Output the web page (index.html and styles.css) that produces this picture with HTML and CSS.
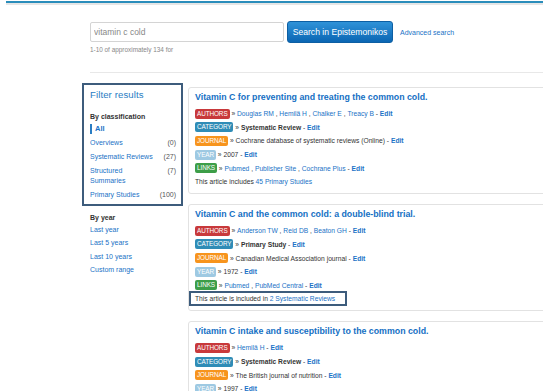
FILE: index.html
```html
<!DOCTYPE html>
<html lang="en">
<head>
    <meta charset="UTF-8">
    <meta name="viewport" content="width=device-width, initial-scale=1.0">
    <title>vitamin c cold - Epistemonikos</title>
    <link rel="stylesheet" href="styles.css">
</head>
<body>
    <div class="topbar"></div>

    <div class="search">
        <div class="search-row">
            <input type="text" class="search-input" value="vitamin c cold">
            <button class="search-btn" type="button">Search in Epistemonikos</button>
            <a href="#" class="advanced">Advanced search</a>
        </div>
        <p class="hits">1-10 of approximately 134 for</p>
    </div>

    <div class="main">
        <!-- Sidebar -->
        <div class="sidebar">
            <div class="filter-box">
                <h2>Filter results</h2>
                <h3>By classification</h3>
                <ul class="filters">
                    <li class="active"><a href="#">All</a></li>
                    <li><a href="#">Overviews</a><span>(0)</span></li>
                    <li><a href="#">Systematic Reviews</a><span>(27)</span></li>
                    <li><a href="#">Structured<br>Summaries</a><span>(7)</span></li>
                    <li><a href="#">Primary Studies</a><span>(100)</span></li>
                </ul>
            </div>
            <div class="year-filter">
                <h3>By year</h3>
                <ul class="years">
                    <li><a href="#">Last year</a></li>
                    <li><a href="#">Last 5 years</a></li>
                    <li><a href="#">Last 10 years</a></li>
                    <li><a href="#">Custom range</a></li>
                </ul>
            </div>
        </div>

        <!-- Results -->
        <div class="results">
            <div class="card">
                <h1><a href="#">Vitamin C for preventing and treating the common cold.</a></h1>
                <div class="row"><span class="label authors">AUTHORS</span> &raquo; <a href="#">Douglas RM</a> , <a href="#">Hemilä H</a> , <a href="#">Chalker E</a> , <a href="#">Treacy B</a> - <a href="#" class="edit">Edit</a></div>
                <div class="row"><span class="label category">CATEGORY</span> &raquo; <b>Systematic Review</b> - <a href="#" class="edit">Edit</a></div>
                <div class="row"><span class="label journal">JOURNAL</span> &raquo; Cochrane database of systematic reviews (Online) - <a href="#" class="edit">Edit</a></div>
                <div class="row"><span class="label year">YEAR</span> &raquo; 2007 - <a href="#" class="edit">Edit</a></div>
                <div class="row"><span class="label links">LINKS</span> &raquo; <a href="#">Pubmed</a> , <a href="#">Publisher Site</a> , <a href="#">Cochrane Plus</a> - <a href="#" class="edit">Edit</a></div>
                <div class="row">This article includes <a href="#">45 Primary Studies</a></div>
            </div>

            <div class="card">
                <h1><a href="#">Vitamin C and the common cold: a double-blind trial.</a></h1>
                <div class="row"><span class="label authors">AUTHORS</span> &raquo; <a href="#">Anderson TW</a> , <a href="#">Reid DB</a> , <a href="#">Beaton GH</a> - <a href="#" class="edit">Edit</a></div>
                <div class="row"><span class="label category">CATEGORY</span> &raquo; <b>Primary Study</b> - <a href="#" class="edit">Edit</a></div>
                <div class="row"><span class="label journal">JOURNAL</span> &raquo; Canadian Medical Association journal - <a href="#" class="edit">Edit</a></div>
                <div class="row"><span class="label year">YEAR</span> &raquo; 1972 - <a href="#" class="edit">Edit</a></div>
                <div class="row"><span class="label links">LINKS</span> &raquo; <a href="#">Pubmed</a> , <a href="#">PubMed Central</a> - <a href="#" class="edit">Edit</a></div>
                <div class="row"><span class="highlight">This article is included in <a href="#">2 Systematic Reviews</a></span></div>
            </div>

            <div class="card">
                <h1><a href="#">Vitamin C intake and susceptibility to the common cold.</a></h1>
                <div class="row"><span class="label authors">AUTHORS</span> &raquo; <a href="#">Hemilä H</a> - <a href="#" class="edit">Edit</a></div>
                <div class="row"><span class="label category">CATEGORY</span> &raquo; <b>Systematic Review</b> - <a href="#" class="edit">Edit</a></div>
                <div class="row"><span class="label journal">JOURNAL</span> &raquo; The British journal of nutrition - <a href="#" class="edit">Edit</a></div>
                <div class="row"><span class="label year">YEAR</span> &raquo; 1997 - <a href="#" class="edit">Edit</a></div>
            </div>
        </div>
    </div>
</body>
</html>
```

FILE: styles.css
```css
body {
    font-family: "Liberation Sans", Arial, sans-serif;
    background-color: #fff;
    color: #333;
    margin: 0;
    padding: 0;
    overflow: hidden;
    height: 391px;
}

a {
    color: #1a72c6;
    text-decoration: none;
}

.topbar {
    margin-left: 6px;
    height: 2px;
    background-color: #2a8dbb;
    border-bottom: 2px solid #e6e6e6;
    margin-top: 1px;
}

/* Search */
.search {
    margin-left: 90px;
    padding-top: 16px;
    padding-bottom: 19px;
    border-bottom: 1px solid #e8e8e8;
}

.search-row {
    display: flex;
    align-items: center;
}

.search-input {
    width: 194px;
    height: 20px;
    box-sizing: border-box;
    border: 1px solid #d4d4d4;
    border-radius: 2px;
    padding: 0 3px;
    font-family: inherit;
    font-size: 8.5px;
    color: #888;
}

.search-btn {
    margin-left: 3px;
    width: 106px;
    height: 22px;
    border: 1px solid #0d5fa3;
    border-radius: 3px;
    background: linear-gradient(#2f92d8, #0b66b3);
    color: #fff;
    font-family: inherit;
    font-size: 8.6px;
    padding: 0;
}

.advanced {
    margin-left: 7px;
    font-size: 7px;
}

.hits {
    margin: 3px 0 0;
    font-size: 6.4px;
    color: #888;
}

/* Main */
.main {
    display: flex;
    margin-top: 10px;
    margin-left: 82px;
}

.sidebar {
    width: 101px;
    flex: none;
}

.filter-box {
    border: 2px solid #3d5c7c;
    padding: 3px 5px 2px 6px;
}

.filter-box h2 {
    margin: 0;
    font-size: 9.6px;
    line-height: 14px;
    color: #2a7dc3;
    font-weight: normal;
    letter-spacing: 0.1px;
}

h3 {
    margin: 10px 0 0;
    font-size: 7px;
    line-height: 10px;
    color: #333;
}

.filters, .years {
    list-style: none;
    margin: 0;
    padding: 0;
    font-size: 7px;
}

.filters li {
    display: flex;
    justify-content: space-between;
    line-height: 10px;
    padding: 2px 0;
    color: #555;
}

.filters li.active a {
    border-left: 2px solid #2a7dc3;
    padding-left: 3px;
    font-weight: bold;
    font-size: 7.5px;
}

.year-filter {
    padding-left: 8px;
}

.year-filter h3 {
    margin-top: 7px;
}

.years li {
    line-height: 13.3px;
}

/* Results */
.results {
    margin-left: 5px;
    margin-top: 4px;
    width: 380px;
    flex: none;
}

.card {
    border: 1px solid #e2e2e2;
    border-radius: 3px;
    padding: 2px 6px 4px;
    margin-bottom: 10.5px;
    font-size: 6.7px;
    color: #333;
}

.card h1 {
    margin: 0 0 3px;
    font-size: 8.8px;
    line-height: 14px;
    font-weight: bold;
}

.card h1 a {
    color: #1470c4;
}

.row {
    height: 13.6px;
    display: flex;
    align-items: center;
    white-space: pre;
}

.row b {
    font-weight: bold;
}

.edit {
    font-weight: bold;
}

.label {
    display: inline-block;
    color: #fff;
    font-size: 6.4px;
    line-height: 10px;
    padding: 0 2px;
    border-radius: 2px;
    letter-spacing: -0.1px;
}

.authors { background-color: #c8393b; }
.category { background-color: #2f8cb6; }
.journal { background-color: #f7941d; }
.year { background-color: #9ec9e2; }
.links { background-color: #3d9e48; }

.highlight {
    position: relative;
}

.highlight::after {
    content: "";
    position: absolute;
    top: -4px;
    bottom: -4px;
    left: -6px;
    right: -12px;
    border: 2px solid #3d5c7c;
}
```
